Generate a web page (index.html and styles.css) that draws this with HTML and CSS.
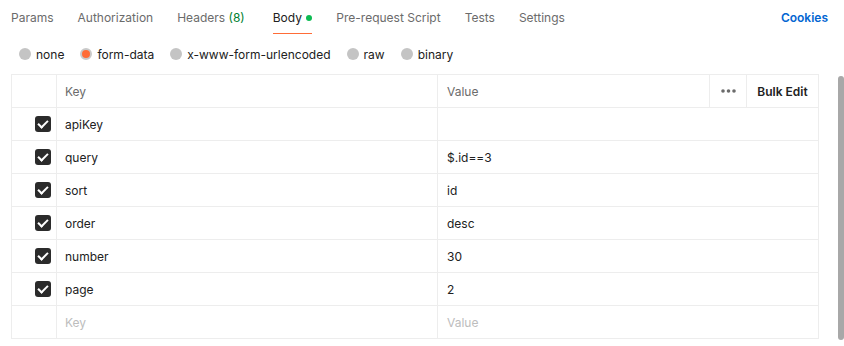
FILE: index.html
```html
<!DOCTYPE html>
<html lang="en">
  <head>
    <meta charset="UTF-8">
    <title>Request Body</title>
    <link rel="stylesheet" href="styles.css">
  </head>
  <body>
    <div class="page">
      <div class="main">
        <div class="tabs">
          <span class="tab">Params</span>
          <span class="tab">Authorization</span>
          <span class="tab">Headers <span class="count">(8)</span></span>
          <span class="tab active">Body <span class="dot"></span></span>
          <span class="tab">Pre-request Script</span>
          <span class="tab">Tests</span>
          <span class="tab">Settings</span>
          <span class="cookies">Cookies</span>
        </div>

        <div class="modes">
          <label class="mode"><span class="radio"></span>none</label>
          <label class="mode"><span class="radio on"></span>form-data</label>
          <label class="mode"><span class="radio"></span>x-www-form-urlencoded</label>
          <label class="mode"><span class="radio"></span>raw</label>
          <label class="mode"><span class="radio"></span>binary</label>
        </div>

        <div class="table">
          <div class="row head">
            <div class="cell check"></div>
            <div class="cell key">Key</div>
            <div class="cell value">Value</div>
            <div class="cell more">
              <svg width="15" height="4" viewBox="0 0 15 4">
                <circle cx="2" cy="2" r="1.8" fill="#6b6b6b"/>
                <circle cx="7.5" cy="2" r="1.8" fill="#6b6b6b"/>
                <circle cx="13" cy="2" r="1.8" fill="#6b6b6b"/>
              </svg>
            </div>
            <div class="cell bulk">Bulk Edit</div>
          </div>
          <div class="row">
            <div class="cell check"><span class="box"></span></div>
            <div class="cell key">apiKey</div>
            <div class="cell value"></div>
          </div>
          <div class="row">
            <div class="cell check"><span class="box"></span></div>
            <div class="cell key">query</div>
            <div class="cell value">$.id==3</div>
          </div>
          <div class="row">
            <div class="cell check"><span class="box"></span></div>
            <div class="cell key">sort</div>
            <div class="cell value">id</div>
          </div>
          <div class="row">
            <div class="cell check"><span class="box"></span></div>
            <div class="cell key">order</div>
            <div class="cell value">desc</div>
          </div>
          <div class="row">
            <div class="cell check"><span class="box"></span></div>
            <div class="cell key">number</div>
            <div class="cell value">30</div>
          </div>
          <div class="row">
            <div class="cell check"><span class="box"></span></div>
            <div class="cell key">page</div>
            <div class="cell value">2</div>
          </div>
          <div class="row empty">
            <div class="cell check"></div>
            <div class="cell key">Key</div>
            <div class="cell value">Value</div>
          </div>
        </div>
      </div>
      <div class="scrollbar"><div class="thumb"></div></div>
    </div>
  </body>
</html>
```

FILE: styles.css
```css
*{
    margin: 0;
    padding: 0;
    box-sizing: border-box;
}

body{
    font-family: Inter, "Noto Sans", sans-serif;
    font-size: 12px;
    color: #212121;
    background: #fff;
}

.page{
    display: flex;
    width: 844px;
    height: 346px;
}

.main{
    width: 819px;
    padding-left: 11px;
}

/* top tabs */
.tabs{
    display: flex;
    align-items: center;
    height: 34px;
    padding-top: 1px;
    gap: 24px;
}

.tab{
    position: relative;
    color: #6b6b6b;
    line-height: 33px;
}

.tab.active{
    margin-left: 4px;
    color: #212121;
}

.tab.active::after{
    content: "";
    position: absolute;
    left: 0;
    right: 0;
    bottom: 0;
    height: 1px;
    background: #ff6c37;
}

.count{
    color: #007f31;
}

.dot{
    display: inline-block;
    width: 6px;
    height: 6px;
    border-radius: 50%;
    background: #0cbb52;
    vertical-align: 1px;
    margin-left: 1px;
}

.cookies{
    margin-left: auto;
    margin-right: -9px;
    color: #0265d2;
    font-weight: 600;
}

/* body mode radios */
.modes{
    display: flex;
    align-items: center;
    height: 40px;
    padding-left: 8px;
    gap: 16px;
}

.mode{
    display: flex;
    align-items: center;
    gap: 5px;
}

.radio{
    width: 12px;
    height: 12px;
    border-radius: 50%;
    background: #c4c4c4;
}

.radio.on{
    background: #ff6c37;
    border: 2px solid #c9c9c9;
}

/* key-value table */
.table{
    border: 1px solid #ededed;
    border-bottom: 0;
}

.row{
    display: flex;
    height: 33px;
    border-bottom: 1px solid #ededed;
}

.cell{
    display: flex;
    align-items: center;
    padding-left: 8px;
}

.check{
    width: 44px;
    justify-content: flex-end;
    padding-right: 5px;
}

.key{
    width: 381px;
    border-left: 1px solid #ededed;
}

.value{
    flex: 1;
    border-left: 1px solid #ededed;
    padding-left: 9px;
}

.head .cell{
    color: #6b6b6b;
}

.more, .bulk{
    border-left: 1px solid #ededed;
}

.more{
    width: 37px;
    justify-content: center;
    padding-left: 0;
}

.head .bulk{
    width: 72px;
    justify-content: center;
    padding-left: 0;
    color: #212121;
    font-weight: 600;
}

.empty .cell{
    color: #bdbdbd;
}

.box{
    position: relative;
    width: 16px;
    height: 16px;
    border-radius: 3px;
    background: #2b2b2b;
}

.box::after{
    content: "";
    position: absolute;
    left: 5px;
    top: 2px;
    width: 4px;
    height: 8px;
    border: solid #fff;
    border-width: 0 2px 2px 0;
    transform: rotate(45deg);
}

/* scrollbar */
.scrollbar{
    width: 25px;
    padding: 76px 0 6px 19px;
}

.thumb{
    width: 6px;
    height: 100%;
    border-radius: 3px;
    background: #a8a8a8;
}
```
